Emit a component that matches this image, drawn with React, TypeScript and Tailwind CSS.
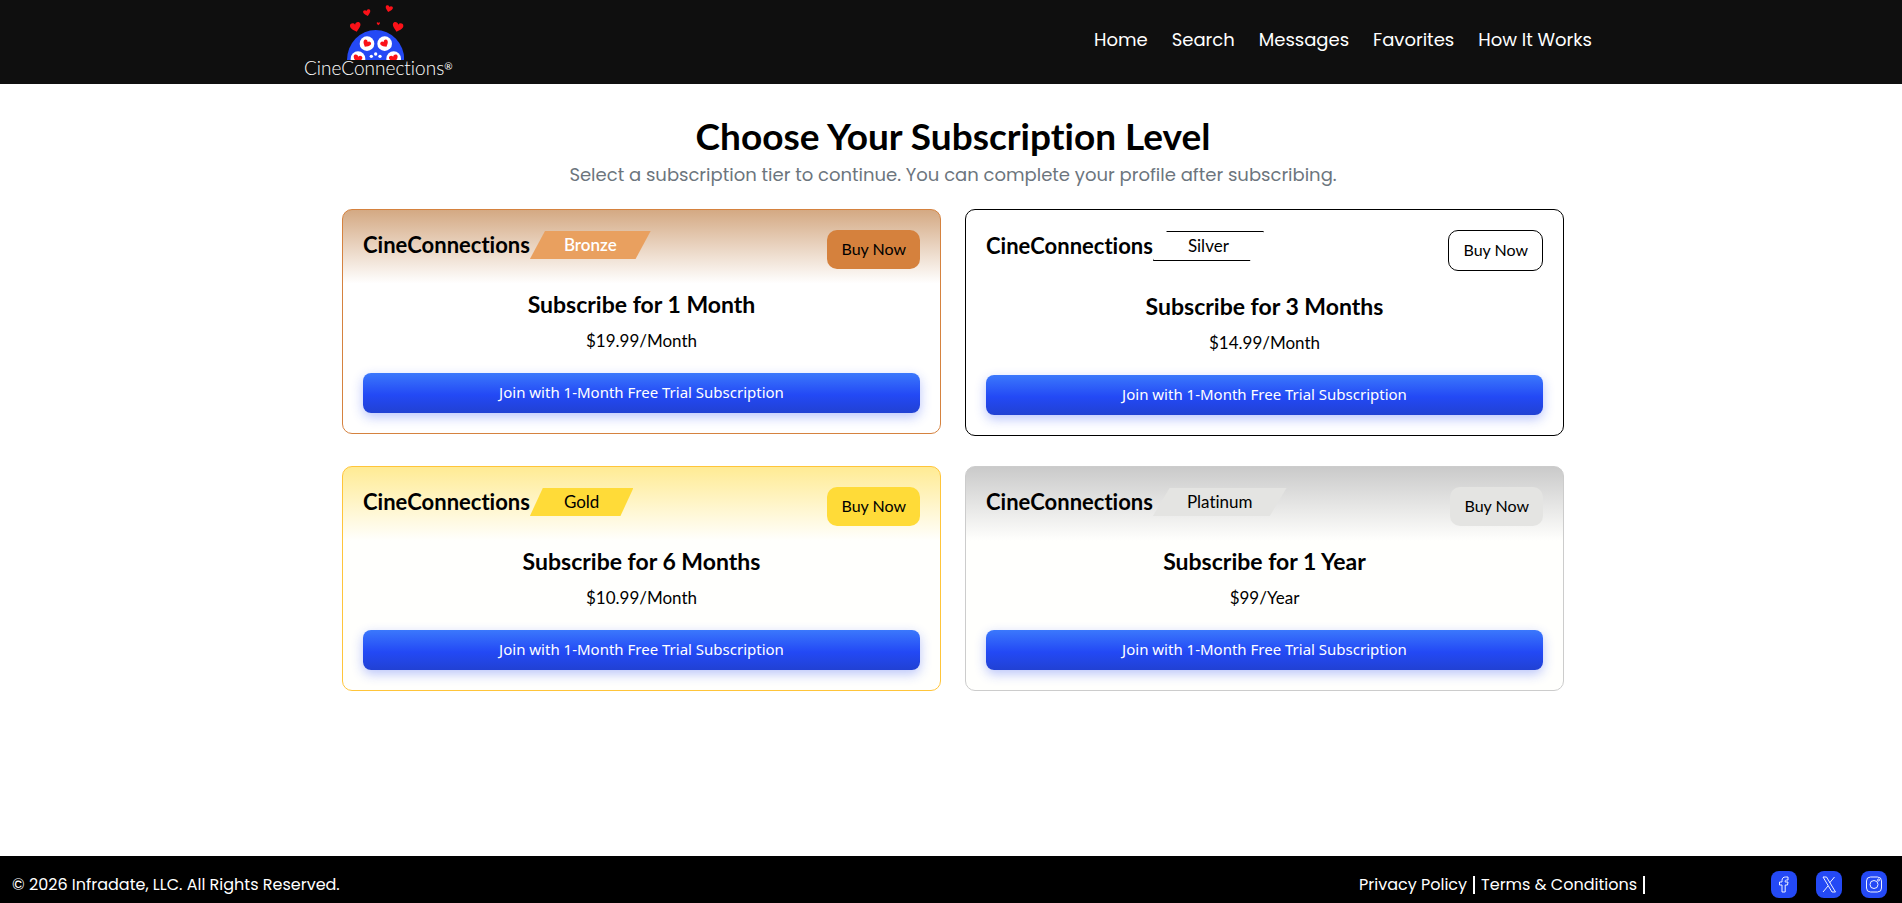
import type { ReactNode } from 'react'

type Tier = {
  name: string
  title: string
  price: string
  card: string
  badge: string
  button: string
}

const navLinks = ['Home', 'Search', 'Messages', 'Favorites', 'How It Works']

const tiers: Tier[] = [
  {
    name: 'Bronze',
    title: 'Subscribe for 1 Month',
    price: '$19.99/Month',
    card: 'border-[#d5823f] bg-[linear-gradient(180deg,#d4a983_0%,#ffffff_33%)]',
    badge: 'bg-[#e9a05f] font-semibold text-white',
    button: 'bg-[#d5813d]',
  },
  {
    name: 'Silver',
    title: 'Subscribe for 3 Months',
    price: '$14.99/Month',
    card: 'border-black bg-white',
    badge: 'border border-black bg-white text-black',
    button: 'border border-black bg-white',
  },
  {
    name: 'Gold',
    title: 'Subscribe for 6 Months',
    price: '$10.99/Month',
    card: 'border-[#ffc53a] bg-[linear-gradient(180deg,#ffeb94_0%,#fffffd_33%)]',
    badge: 'bg-[#ffdb38] text-black',
    button: 'bg-[#ffdb38]',
  },
  {
    name: 'Platinum',
    title: 'Subscribe for 1 Year',
    price: '$99/Year',
    card: 'border-[#cccccc] bg-[linear-gradient(180deg,#cacaca_0%,#fffffd_33%)]',
    badge: 'bg-[#e4e4e2] text-black',
    button: 'bg-[#e4e4e2]',
  },
]

function Heart({ x, y, size, rotate = 0 }: { x: number; y: number; size: number; rotate?: number }) {
  return (
    <path
      transform={`translate(${x} ${y}) rotate(${rotate}) scale(${size / 20})`}
      d="M0 10 C-4 6 -11 2 -11 -4 C-11 -10 -2 -11 0 -5 C2 -11 11 -10 11 -4 C11 2 4 6 0 10Z"
      fill="#fb1118"
    />
  )
}

function Logo() {
  return (
    <a href="#" aria-label="CineConnections" className="flex flex-col items-center">
      <svg width="71" height="60" viewBox="159 0 213 180" aria-hidden="true">
        <defs>
          <clipPath id="dome">
            <path d="M171 180 A86 90 0 0 1 343 180Z" />
          </clipPath>
        </defs>
        <Heart x={231} y={38} size={20} rotate={-14} />
        <Heart x={297} y={26} size={20} rotate={14} />
        <Heart x={197} y={81} size={29} rotate={-14} />
        <Heart x={323} y={81} size={29} rotate={14} />
        <Heart x={265} y={71} size={9} />
        <g clipPath="url(#dome)">
          <rect x="171" y="90" width="172" height="90" fill="#2449f5" />
          <circle cx="231" cy="131" r="22" fill="#fff" />
          <circle cx="284" cy="131" r="22" fill="#fff" />
          <circle cx="204" cy="176" r="22" fill="#fff" />
          <circle cx="311" cy="176" r="22" fill="#fff" />
          <Heart x={230} y={131} size={22} rotate={30} />
          <Heart x={284} y={131} size={22} rotate={-30} />
          <Heart x={203} y={176} size={24} rotate={14} />
          <Heart x={311} y={176} size={24} rotate={-14} />
          <circle cx="244" cy="169" r="5" fill="#fff" />
          <circle cx="257" cy="162" r="5" fill="#fff" />
          <circle cx="270" cy="169" r="5" fill="#fff" />
        </g>
      </svg>
      <span className="font-['Lato',sans-serif] text-[19px] leading-4 font-light text-white [font-variant-ligatures:none]">
        CineConnections<sup className="text-[10px] font-normal">®</sup>
      </span>
    </a>
  )
}

function TierCard({ tier }: { tier: Tier }) {
  return (
    <section
      className={`rounded-[10px] border p-5 font-['Futura','Lato',sans-serif] text-black [font-variant-ligatures:none] ${tier.card}`}
    >
      <div className="flex items-start justify-between">
        <div className="flex items-center pt-px">
          <h2 className="text-[22px] leading-7 font-bold">CineConnections</h2>
          <span
            className={`px-[34px] text-[17px] leading-7 [clip-path:polygon(12.5%_0,100%_0,87.5%_100%,0_100%)] ${tier.badge}`}
          >
            {tier.name}
          </span>
        </div>
        <button type="button" className={`rounded-[10px] px-3.5 pb-0.5 text-base leading-[37px] ${tier.button}`}>
          Buy Now
        </button>
      </div>
      <div className="mt-[19px] text-center">
        <h3 className="text-[23px] leading-8 font-bold">{tier.title}</h3>
        <p className="mt-[7px] text-[17px] leading-7">{tier.price}</p>
      </div>
      <button
        type="button"
        className="mt-[18px] h-10 w-full rounded-lg bg-[linear-gradient(180deg,#3b78fc_0%,#2349f5_55%,#2141d3_100%)] pb-0.5 font-['Segoe_UI','Noto_Sans',sans-serif] text-[15px] text-white shadow-[0_4px_12px_rgba(36,73,245,0.32)]"
      >
        Join with 1-Month Free Trial Subscription
      </button>
    </section>
  )
}

function SocialLink({ label, children }: { label: string; children: ReactNode }) {
  return (
    <a href="#" aria-label={label} className="block">
      <svg width="26" height="27" viewBox="0 0 26 27" fill="none" stroke="#eef2ff" strokeLinejoin="round">
        <rect width="26" height="27" rx="8" fill="#2449f5" stroke="none" />
        {children}
      </svg>
    </a>
  )
}

export default function App() {
  return (
    <div className="flex min-h-screen flex-col bg-white font-['Poppins','Inter',sans-serif]">
      <header className="bg-[#0f0f0f] pl-0.5">
        <div className="mx-auto flex h-[84px] max-w-[1296px] items-start justify-between pr-2">
          <Logo />
          <nav className="flex gap-6 pt-[26px] text-[18px] leading-7 text-white">
            {navLinks.map((link) => (
              <a key={link} href="#">
                {link}
              </a>
            ))}
          </nav>
        </div>
      </header>

      <main className="flex-1 pt-[29px] pl-1">
        <div className="mx-auto max-w-[1222px]">
          <div className="text-center">
            <h1 className="font-['Futura','Lato',sans-serif] text-[37px] leading-[46px] font-bold text-black [font-variant-ligatures:none]">
              Choose Your Subscription Level
            </h1>
            <p className="mt-px text-[18px] leading-[30px] text-[#6c757d]">
              Select a subscription tier to continue. You can complete your profile after subscribing.
            </p>
          </div>
          <div className="mt-[19px] grid grid-cols-1 items-start gap-x-6 gap-y-[30px] md:grid-cols-2">
            {tiers.map((tier) => (
              <TierCard key={tier.name} tier={tier} />
            ))}
          </div>
        </div>
      </main>

      <footer className="flex h-[47px] items-center justify-between bg-black pt-2.5 pr-[15px] pl-3 text-base leading-6 text-white">
        <p>© 2026 Infradate, LLC. All Rights Reserved.</p>
        <div className="flex items-center gap-[126px]">
          <div className="flex items-center gap-1.5">
            <a href="#">Privacy Policy</a>
            <span className="h-[18px] w-0.5 bg-white" />
            <a href="#">Terms &amp; Conditions</a>
            <span className="h-[18px] w-0.5 bg-white" />
          </div>
          <div className="flex gap-[19px]">
            <SocialLink label="Facebook">
              <path d="M11 21 V14 H8.5 V11 H11 V9.5 C11 7 12.5 6 14.5 6 H17 V9 H15.5 C14.5 9 14.2 9.5 14.2 10.3 V11 H17 L16.5 14 H14.2 V21Z" />
            </SocialLink>
            <SocialLink label="X">
              <path d="M7 6 H10.5 L19.5 21 H16Z M18.5 6 L13.5 12 M12 15 L7 21" />
            </SocialLink>
            <SocialLink label="Instagram">
              <rect x="5.5" y="6" width="15" height="15" rx="4" />
              <circle cx="13" cy="13.5" r="4" />
              <circle cx="17.5" cy="9" r="1" />
            </SocialLink>
          </div>
        </div>
      </footer>
    </div>
  )
}
